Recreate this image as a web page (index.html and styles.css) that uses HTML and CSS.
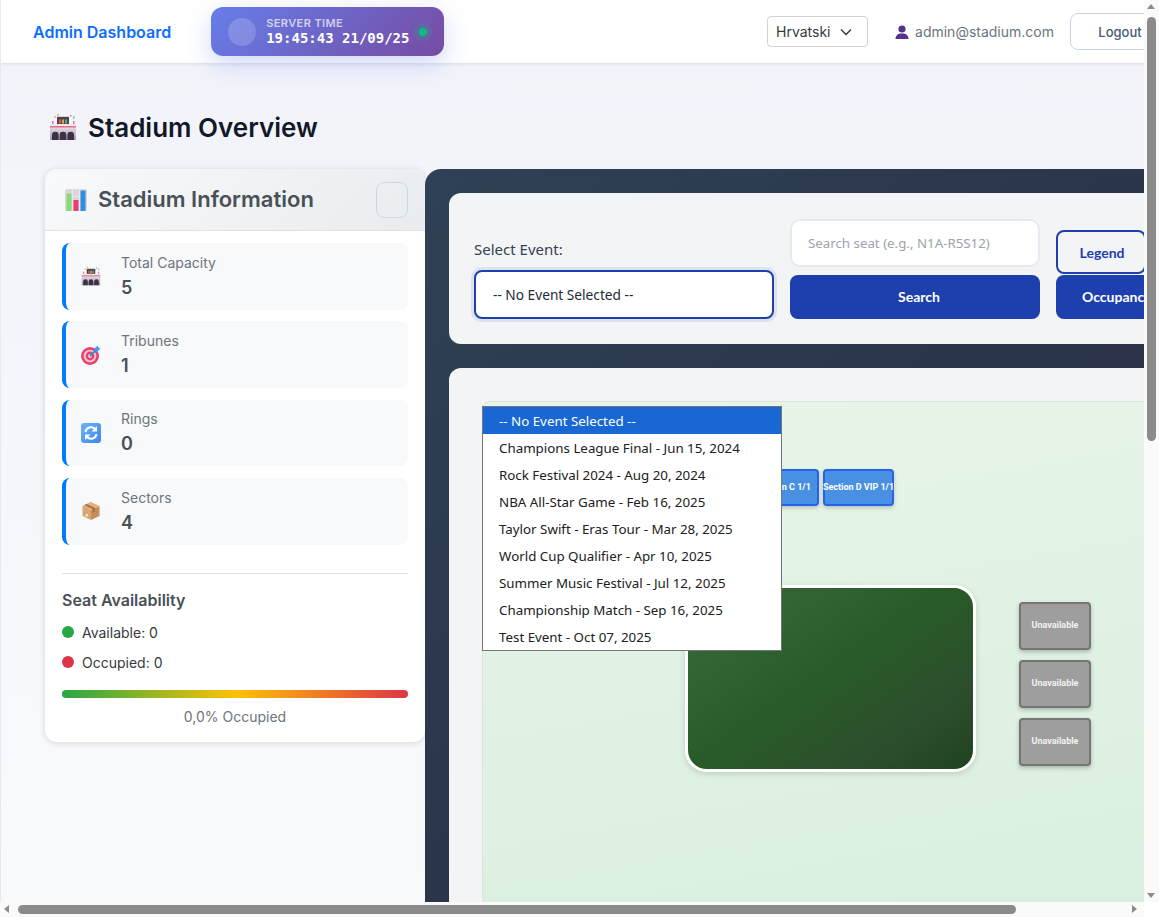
FILE: index.html
```html
<!DOCTYPE html>
<html lang="hr">
<head>
<meta charset="utf-8">
<title>Stadium Overview</title>
<link rel="stylesheet" href="styles.css">
</head>
<body>
<svg class="defs" width="0" height="0" aria-hidden="true">
  <defs>
    <linearGradient id="g-body" x1="0" y1="0" x2="0" y2="1">
      <stop offset="0" stop-color="#e4dce6"/>
      <stop offset="1" stop-color="#a89aab"/>
    </linearGradient>
    <linearGradient id="g-sync" x1="0" y1="0" x2="1" y2="1">
      <stop offset="0" stop-color="#6fb1f8"/>
      <stop offset="1" stop-color="#3f86ee"/>
    </linearGradient>
  </defs>
  <symbol id="i-stadium" viewBox="0 0 28 28">
    <rect x="1" y="14" width="26" height="13" fill="url(#g-body)"/>
    <rect x="1" y="11" width="26" height="3" fill="#f5e4e8"/>
    <rect x="1" y="13" width="26" height="1.500" fill="#e2708a"/>
    <rect x="8" y="4" width="12" height="7" fill="#4b4452"/>
    <rect x="8" y="3" width="12" height="1" fill="#d9d3da"/>
    <rect x="10" y="6.500" width="2" height="4" fill="#e5584d"/>
    <rect x="13" y="6.500" width="2" height="4" fill="#e7a63a"/>
    <rect x="16" y="6.500" width="2" height="4" fill="#4fb060"/>
    <rect x="5" y="3" width="2" height="2" fill="#f0c674"/>
    <rect x="8" y="1" width="2" height="1.500" fill="#e5a0b0"/>
    <rect x="24" y="3" width="1.500" height="3" fill="#7fd0a8"/>
    <rect x="21" y="2" width="1.500" height="1.500" fill="#e2708a"/>
    <rect x="3" y="8" width="1.500" height="3" fill="#e2708a"/>
    <rect x="24" y="8" width="1.500" height="3" fill="#e2708a"/>
    <path d="M3 27v-5a3.300 3.300 0 0 1 6.600 0v5zM10.700 27v-5a3.300 3.300 0 0 1 6.600 0v5zM18.400 27v-5a3.300 3.300 0 0 1 6.600 0v5z" fill="#3d3145"/>
  </symbol>
  <symbol id="i-chart" viewBox="0 0 22 22">
    <rect x="0" y="0" width="22" height="22" rx="2" fill="#dbd6d9"/>
    <path d="M7.300 0v22M14.600 0v22M0 7.300h22M0 14.600h22" stroke="#f2f0f1" stroke-width=".8"/>
    <rect x="1.500" y="4.500" width="5" height="17.500" fill="#86dc74"/>
    <rect x="8.500" y="11" width="5" height="11" fill="#ea3d76"/>
    <rect x="15.500" y="1.500" width="5" height="20.500" fill="#2f8fe0"/>
  </symbol>
  <symbol id="i-target" viewBox="0 0 20 20">
    <circle cx="9" cy="11" r="9" fill="#e8436e"/>
    <circle cx="9" cy="11" r="6.300" fill="#f6c8d3"/>
    <circle cx="9" cy="11" r="4.400" fill="#e8436e"/>
    <circle cx="9" cy="11" r="2" fill="#f6c8d3"/>
    <path d="M9 11l8-8" stroke="#2f8fe0" stroke-width="1.800"/>
    <path d="M13 4l3.500-3.500 1 2 2 1-3.500 3.500z" fill="#3ea0ee"/>
  </symbol>
  <symbol id="i-sync" viewBox="0 0 20 20">
    <rect width="20" height="20" rx="3" fill="url(#g-sync)"/>
    <path d="M4.500 9a5.500 5.500 0 0 1 9.500-3" fill="none" stroke="#fff" stroke-width="2"/>
    <path d="M16 3v5.500h-5.500z" fill="#fff"/>
    <path d="M15.500 11a5.500 5.500 0 0 1-9.500 3" fill="none" stroke="#fff" stroke-width="2"/>
    <path d="M4 17v-5.500h5.500z" fill="#fff"/>
  </symbol>
  <symbol id="i-box" viewBox="0 0 20 20">
    <path d="M10 1L1.500 5v10L10 19z" fill="#dba570"/>
    <path d="M10 9v10l8.500-4V5z" fill="#c68c59"/>
    <path d="M1.500 5L10 9l8.500-4L10 1z" fill="#e3b080"/>
    <path d="M5.500 3l8.500 4v3.500l-2.500 1.200V8L3.500 4z" fill="#a3714a"/>
    <rect x="4.500" y="13" width="2.500" height="2.500" fill="#f0e2d2"/>
  </symbol>
  <symbol id="i-bust" viewBox="0 0 14 14">
    <circle cx="7" cy="4" r="3.600" fill="#55308d"/>
    <path d="M0.500 14c0-3.500 2.500-5 4.500-5.500h4c2 .5 4.500 2 4.500 5.500z" fill="#55308d"/>
  </symbol>
</svg>

<div class="frame">
  <div class="page">
    <header class="topbar">
      <a class="brand">Admin Dashboard</a>
      <div class="clock">
        <span class="clock-disc"></span>
        <div class="clock-text">
          <span class="clock-label">SERVER TIME</span>
          <span class="clock-value">19:45:43 21/09/25</span>
        </div>
        <span class="clock-dot"></span>
      </div>
      <div class="lang">
        <span>Hrvatski</span>
        <svg class="chev" width="12" height="8" viewBox="0 0 12 8"><path d="M1 1.500l5 5 5-5" fill="none" stroke="#343a40" stroke-width="1.500"/></svg>
      </div>
      <div class="user">
        <svg class="bust" width="14" height="14"><use href="#i-bust"/></svg>
        <span>admin@stadium.com</span>
      </div>
      <button class="logout">Logout</button>
    </header>

    <main class="main">
      <h1 class="page-title">
        <svg class="title-icon" width="28" height="28"><use href="#i-stadium"/></svg>
        <span>Stadium Overview</span>
      </h1>

      <div class="columns">
        <aside class="info">
          <div class="info-head">
            <svg class="info-icon" width="22" height="22"><use href="#i-chart"/></svg>
            <h2 class="info-title">Stadium Information</h2>
            <button class="collapse" aria-label="Toggle"></button>
          </div>
          <div class="info-body">
            <div class="stat">
              <svg class="stat-icon" width="20" height="20"><use href="#i-stadium"/></svg>
              <div class="stat-text"><span class="stat-label">Total Capacity</span><span class="stat-value">5</span></div>
            </div>
            <div class="stat">
              <svg class="stat-icon" width="20" height="20"><use href="#i-target"/></svg>
              <div class="stat-text"><span class="stat-label">Tribunes</span><span class="stat-value">1</span></div>
            </div>
            <div class="stat">
              <svg class="stat-icon" width="20" height="20"><use href="#i-sync"/></svg>
              <div class="stat-text"><span class="stat-label">Rings</span><span class="stat-value">0</span></div>
            </div>
            <div class="stat">
              <svg class="stat-icon" width="20" height="20"><use href="#i-box"/></svg>
              <div class="stat-text"><span class="stat-label">Sectors</span><span class="stat-value">4</span></div>
            </div>
            <div class="avail">
              <h3 class="avail-title">Seat Availability</h3>
              <div class="avail-row"><span class="dot dot-green"></span>Available: 0</div>
              <div class="avail-row"><span class="dot dot-red"></span>Occupied: 0</div>
              <div class="avail-bar"></div>
              <div class="avail-note">0,0% Occupied</div>
            </div>
          </div>
        </aside>

        <section class="panel">
          <div class="controls">
            <div class="ctl-event">
              <label class="ctl-label">Select Event:</label>
              <div class="event-select">-- No Event Selected --</div>
            </div>
            <div class="ctl-search">
              <input class="seat-input" type="text" placeholder="Search seat (e.g., N1A-R5S12)">
              <button class="btn-solid btn-search">Search</button>
            </div>
            <div class="ctl-extra">
              <button class="btn-outline">Legend</button>
              <button class="btn-solid btn-occ">Occupancy</button>
            </div>
          </div>

          <div class="map-card">
            <div class="map">
              <div class="sector sector-c">Section C 1/1</div>
              <div class="sector sector-d">Section D VIP 1/1</div>
              <div class="field"></div>
              <div class="blocked blocked-1">Unavailable</div>
              <div class="blocked blocked-2">Unavailable</div>
              <div class="blocked blocked-3">Unavailable</div>
              <ul class="event-menu">
                <li class="event-opt is-active">-- No Event Selected --</li>
                <li class="event-opt">Champions League Final - Jun 15, 2024</li>
                <li class="event-opt">Rock Festival 2024 - Aug 20, 2024</li>
                <li class="event-opt">NBA All-Star Game - Feb 16, 2025</li>
                <li class="event-opt">Taylor Swift - Eras Tour - Mar 28, 2025</li>
                <li class="event-opt">World Cup Qualifier - Apr 10, 2025</li>
                <li class="event-opt">Summer Music Festival - Jul 12, 2025</li>
                <li class="event-opt">Championship Match - Sep 16, 2025</li>
                <li class="event-opt">Test Event - Oct 07, 2025</li>
              </ul>
            </div>
          </div>
        </section>
      </div>
    </main>
  </div>

  <div class="vbar">
    <span class="arrow arrow-up"></span>
    <span class="vthumb"></span>
    <span class="arrow arrow-down"></span>
  </div>
  <div class="hbar">
    <span class="arrow arrow-left"></span>
    <span class="hthumb"></span>
    <span class="arrow arrow-right"></span>
  </div>
  <div class="corner"></div>
</div>
</body>
</html>
```
FILE: styles.css
```css
* { box-sizing: border-box; }
html, body { margin: 0; padding: 0; height: 100%; overflow: hidden; }
body { font-family: Inter, "Liberation Sans", sans-serif; color: #212529; background: #fff; }
.defs { position: absolute; }

.frame {
  width: 1159px; height: 917px;
  display: grid;
  grid-template-columns: 1144px 15px;
  grid-template-rows: 902px 15px;
  overflow: hidden;
}

.page {
  overflow: hidden;
  border-left: 1px solid #e3eaf6;
  background: linear-gradient(180deg, #f2f3fa 0%, #f9fafc 100%);
}

/* top bar */
.topbar {
  width: 1190px; height: 63px;
  display: flex; align-items: center;
  padding: 0 21px 0 32px;
  background: #fff;
  box-shadow: 0 1px 3px rgba(30, 40, 80, .12);
  position: relative;
}
.brand { font-size: 16px; font-weight: 600; color: #0d6efd; }
.clock {
  width: 233px; height: 49px;
  margin: 0 0 0 40px;
  display: flex; align-items: center;
  padding: 0 17px 0 17px;
  border-radius: 12px;
  background: linear-gradient(135deg, #667eea 0%, #764ba2 100%);
  box-shadow: 0 8px 24px rgba(102, 126, 234, .3);
}
.clock-disc { width: 28px; height: 28px; border-radius: 50%; background: rgba(255, 255, 255, .18); }
.clock-text { display: flex; flex-direction: column; margin-left: 10px; flex: 1; padding-bottom: 1px; }
.clock-label { font-size: 11px; line-height: 12px; font-weight: 600; letter-spacing: .4px; color: rgba(255, 255, 255, .7); }
.clock-value { font-family: "DejaVu Sans Mono", monospace; font-size: 14px; line-height: 16px; margin-top: 1px; font-weight: 700; color: #fff; }
.clock-dot { width: 8px; height: 8px; border-radius: 50%; background: #10b981; box-shadow: 0 0 0 5px rgba(16, 185, 129, .2); }

.lang {
  width: 101px; height: 31px;
  margin: 0 0 0 auto;
  display: flex; align-items: center; justify-content: space-between;
  padding: 0 15px 0 8px;
  border: 1px solid #ced4da; border-radius: 4px;
  font-size: 14px; color: #343a40;
}
.user { display: flex; align-items: center; gap: 6px; margin-left: 27px; font-size: 14px; color: #6c757d; }
.logout {
  width: 100px; height: 37px; margin-left: 16px;
  font: 500 13px Inter, sans-serif; color: #495a75;
  background: #fff; border: 1px solid #cbd5e6; border-radius: 8px;
}

/* main */
.main { padding: 0 0 0 44px; width: 1400px; }
.page-title { display: flex; align-items: center; gap: 11px; margin: 49px 0 27px 4px; height: 30px; font-size: 26px; font-weight: 600; color: #111827; }
.title-icon { flex: none; }
.columns { display: flex; align-items: flex-start; }

/* sidebar */
.info { width: 380px; flex: none; background: #fff; border-radius: 12px; box-shadow: 0 1px 6px rgba(20, 30, 50, .16); overflow: hidden; }
.info-head {
  height: 62px;
  display: flex; align-items: center;
  padding: 0 17px 0 20px;
  background: linear-gradient(135deg, #f8f9fa, #e9ecef);
  border-bottom: 1px solid #dee2e6;
}
.info-icon { flex: none; margin-right: 11px; }
.info-title { margin: 0 0 2px; flex: 1; font-size: 22px; font-weight: 600; color: #495057; white-space: nowrap; }
.collapse { width: 32px; height: 36px; background: transparent; border: 1px solid #ccd7e6; border-radius: 8px; }
.info-body { padding: 12px 17px 17px; }
.stat {
  height: 66.700px;
  display: flex; align-items: center;
  margin-bottom: 11.600px;
  padding-left: 15px;
  background: #f8f9fa;
  border-left: 4px solid #007bff;
  border-radius: 8px;
}
.stat-icon { flex: none; margin-right: 20px; }
.stat-text { display: flex; flex-direction: column; gap: 6px; }
.stat-label { font-size: 14px; line-height: 17px; color: #6c757d; }
.stat-value { font-size: 18px; line-height: 22px; font-weight: 600; color: #495057; }
.avail { margin-top: 28px; border-top: 1px solid #dee2e6; padding-top: 17px; }
.avail-title { margin: 0 0 14px; font-size: 16px; line-height: 19px; font-weight: 600; color: #495057; }
.avail-row { display: flex; align-items: center; gap: 8px; height: 17px; margin-bottom: 13px; font-size: 14px; color: #343a40; }
.dot { width: 12px; height: 12px; border-radius: 50%; }
.dot-green { background: #28a745; }
.dot-red { background: #dc3545; }
.avail-bar { height: 8px; margin-top: 19px; border-radius: 4px; background: linear-gradient(90deg, #28a745, #ffc107, #dc3545); }
.avail-note { margin-top: 10px; text-align: center; font-size: 14px; line-height: 17px; color: #6c757d; }

/* dark panel */
.panel {
  width: 980px; height: 760px; flex: none;
  padding: 24px;
  border-radius: 16px 0 0 0;
  background: linear-gradient(135deg, #2f4156 0%, #2a3347 50%, #26334a 100%);
}
.controls {
  height: 151px;
  display: flex; align-items: flex-end; gap: 16px;
  padding: 0 25px 25px;
  background: #f3f4f6;
  border-radius: 12px;
}
.ctl-event { width: 300px; }
.ctl-label { display: block; margin-bottom: 11px; font: 15px/20px "Noto Sans", sans-serif; color: #374151; }
.event-select {
  height: 49px; display: flex; align-items: center;
  padding-left: 17px;
  font: 13.700px "Noto Sans", sans-serif; color: #1f2937;
  background: #fff;
  border: 2px solid #1e40af; border-radius: 8px;
  box-shadow: 0 0 0 3px rgba(30, 64, 175, .1);
}
.ctl-search { width: 250px; display: flex; flex-direction: column; gap: 8px; }
.seat-input {
  height: 48px; padding: 0 16px;
  font: 13.300px "Noto Sans", sans-serif; color: #1f2937;
  background: #fff; border: 2px solid #e5e9f2; border-radius: 10px; outline: none;
}
.seat-input::placeholder { color: #9ca3af; opacity: 1; }
.btn-solid {
  height: 44px; border: 0; border-radius: 8px;
  padding-bottom: 2px;
  background: #1e40af; color: #fff;
  font: 700 14px Lato, sans-serif;
}
.btn-search { padding-left: 14px; }
.ctl-extra { display: flex; flex-direction: column; align-items: flex-start; gap: 1px; }
.btn-outline {
  width: 90px; height: 44px; padding-left: 8px;
  background: #f3f4f6; color: #1e40af;
  border: 2px solid #1e40af; border-radius: 8px;
  font: 700 14px Lato, sans-serif;
}
.btn-occ { width: 170px; padding-left: 26px; text-align: left; }

.map-card { margin-top: 24px; padding: 33px 33px 0; height: 600px; background: #f3f4f6; border-radius: 12px; }
.map {
  position: relative;
  height: 560px;
  background: linear-gradient(170deg, #e8f5e9 0%, #d7eedd 100%);
  border: 1px solid #dde3dd; border-radius: 8px 0 0 0;
}

/* items on the seat map canvas */
.sector {
  position: absolute; top: 67px; width: 71px; height: 37px;
  padding-bottom: 2px;
  display: flex; align-items: center; justify-content: center;
  font: 700 9px Roboto, sans-serif; color: #fff; white-space: nowrap;
  background: #4a90e2; border: 2px solid #2563eb; border-radius: 4px;
  box-shadow: 0 2px 4px rgba(0, 0, 0, .2);
}
.sector-c { left: 265px; }
.sector-d { left: 340px; }
.field {
  position: absolute; left: 202px; top: 183px; width: 291px; height: 187px;
  border: 3px solid #fff; border-radius: 22px;
  background: linear-gradient(145deg, #3c6b3c 0%, #285a28 50%, #2d4d2d 80%, #1e421e 100%);
  box-shadow: 0 2px 6px rgba(0, 0, 0, .15);
}
.blocked {
  position: absolute; left: 536px; width: 72px; height: 48px;
  padding-top: 13px; text-align: center;
  font: 700 9px/16px Roboto, sans-serif; color: #f2f2f2;
  background: #9e9e9e; border: 2px solid #757575; border-radius: 4px;
  box-shadow: 0 2px 4px rgba(0, 0, 0, .25);
}
.blocked-1 { top: 200px; }
.blocked-2 { top: 258px; }
.blocked-3 { top: 316px; }

.event-menu {
  position: absolute; left: -1px; top: 4px; width: 300px;
  margin: 0; padding: 0; list-style: none;
  background: #fff; border: 1px solid #767676;
}
.event-opt { height: 27px; padding: 1px 0 0 16px; font: 13.330px/27px "Noto Sans", sans-serif; color: #202020; white-space: nowrap; overflow: hidden; }
.is-active { background: #1967d2; color: #fff; }

/* scrollbars */
.vbar { position: relative; background: #fafafa; }
.hbar { position: relative; background: #fafafa; }
.corner { background: #fff; }
.vthumb { position: absolute; left: 3px; top: 17px; width: 9px; height: 424px; border-radius: 5px; background: #8b8b8b; }
.hthumb { position: absolute; left: 18px; top: 3px; width: 998px; height: 9px; border-radius: 5px; background: #8b8b8b; }
.arrow { position: absolute; width: 0; height: 0; border-style: solid; border-color: transparent; }
.arrow-up { left: 3px; top: 4px; border-width: 0 4.500px 5px; border-bottom-color: #8b8b8b; }
.arrow-down { left: 3px; bottom: 4px; border-width: 5px 4.500px 0; border-top-color: #8b8b8b; }
.arrow-left { left: 4px; top: 3px; border-width: 4.500px 5px 4.500px 0; border-right-color: #8b8b8b; }
.arrow-right { left: 1132px; top: 3px; border-width: 4.500px 0 4.500px 5px; border-left-color: #8b8b8b; }
```
